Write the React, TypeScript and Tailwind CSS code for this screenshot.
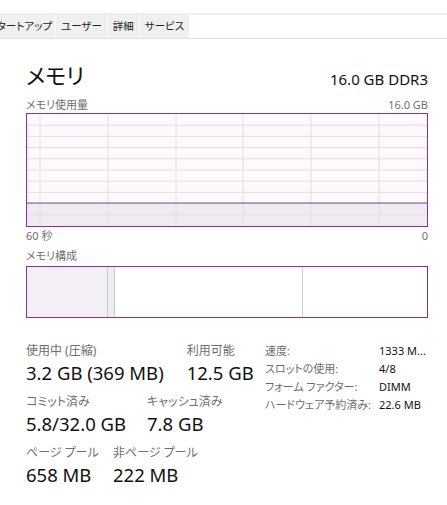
const font = "font-['Noto_Sans','Noto_Sans_CJK_JP',sans-serif] [font-feature-settings:'palt']"

const tabs = ['タートアップ', 'ユーザー', '詳細', 'サービス']

function UsageGraph() {
  const vLines = [13, 81, 149, 216, 284, 352]
  const hLines = [1, 2, 3, 4, 5, 6, 7, 8, 9].map((k) => k * 11.2)
  const used = 89
  return (
    <div className="h-[114px] border border-[#8a2fa0] bg-[#fdf9fd]">
      <svg width="100%" height="100%" viewBox="0 0 400 112" preserveAspectRatio="none" className="block">
        <rect x="0" y={used} width="400" height={112 - used} fill="#f1eaf3" />
        {hLines.map((y) => (
          <line key={y} x1="0" x2="400" y1={y} y2={y} stroke="#e4dce6" strokeWidth="1" />
        ))}
        {vLines.map((x) => (
          <line key={x} x1={x} x2={x} y1="0" y2="112" stroke="#e4dce6" strokeWidth="1" />
        ))}
        <line x1="0" x2="400" y1={used} y2={used} stroke="#7b4a8c" strokeWidth="1.2" />
      </svg>
    </div>
  )
}

function Composition() {
  return (
    <div className="flex h-[52px] border border-[#8a2fa0] bg-white">
      <div className="w-[80px] bg-[#f4eef6]" />
      <div className="w-[8px] border-x border-[#c9c9c9] bg-[#ededed]" />
      <div className="w-[188px] border-r border-[#cfcfcf]" />
      <div className="flex-1" />
    </div>
  )
}

function Stat({ label, value, w }: { label: string; value: string; w?: string }) {
  return (
    <div className={`flex shrink-0 flex-col whitespace-nowrap ${w ?? ''}`}>
      <span className="text-[12px] leading-[14px] text-[#6e6e6e]">{label}</span>
      <span className="mt-[4px] text-[18.5px] leading-[22px] text-[#111]">{value}</span>
    </div>
  )
}

export default function App() {
  return (
    <div className={`${font} w-[447px] h-[505px] bg-white overflow-hidden`}>
      <div className="mt-[13px] border-t-2 border-[#efefef]" />
      <div className="flex h-[24px] border-b border-[#e2e2e2]">
        {tabs.map((t, i) => (
          <div
            key={t}
            className={`flex items-center overflow-hidden bg-[#f0f0f0] border-r border-[#fafafa] text-[10.5px] text-[#222] ${
              i === 0 ? 'w-[56px] shrink-0 justify-end pr-[3px]' : 'px-[5px]'
            }`}
          >
            <span className="whitespace-nowrap">{t}</span>
          </div>
        ))}
      </div>

      <div className="pl-[26px] pr-[19px]">
        <div className="mt-[23px] flex h-[26px] items-end justify-between">
          <span className="text-[22px] leading-[26px] text-[#111]">メモリ</span>
          <span className="text-[15px] leading-[18px] text-[#111]">16.0 GB DDR3</span>
        </div>
        <div className="mt-[10px] flex justify-between text-[11px] leading-[13px] text-[#707070]">
          <span>メモリ使用量</span>
          <span>16.0 GB</span>
        </div>
        <div className="mt-[2px]">
          <UsageGraph />
        </div>
        <div className="mt-[2px] flex justify-between text-[11px] leading-[13px] text-[#707070]">
          <span>60 秒</span>
          <span>0</span>
        </div>
        <div className="mt-[7px] text-[11px] leading-[13px] text-[#707070]">メモリ構成</div>
        <div className="mt-[4px]">
          <Composition />
        </div>

        <div className="mt-[26px] flex items-start">
          <div className="flex shrink-0 flex-col gap-[11px]">
            <div className="flex gap-[23px]">
              <Stat label="使用中 (圧縮)" value="3.2 GB (369 MB)" />
              <Stat label="利用可能" value="12.5 GB" />
            </div>
            <div className="flex gap-[21px]">
              <Stat label="コミット済み" value="5.8/32.0 GB" />
              <Stat label="キャッシュ済み" value="7.8 GB" />
            </div>
            <div className="flex gap-[20px]">
              <Stat label="ページ プール" value="658 MB" w="w-[67px]" />
              <Stat label="非ページ プール" value="222 MB" />
            </div>
          </div>
          <div className="ml-auto grid w-[163px] grid-cols-[114px_1fr] gap-y-[4px] whitespace-nowrap text-[11px] leading-[14px] text-[#111]">
            <span className="text-[#6e6e6e]">速度:</span>
            <span>1333 M...</span>
            <span className="text-[#6e6e6e]">スロットの使用:</span>
            <span>4/8</span>
            <span className="text-[#6e6e6e]">フォーム ファクター:</span>
            <span>DIMM</span>
            <span className="text-[#6e6e6e]">ハードウェア予約済み:</span>
            <span>22.6 MB</span>
          </div>
        </div>
      </div>
    </div>
  )
}
